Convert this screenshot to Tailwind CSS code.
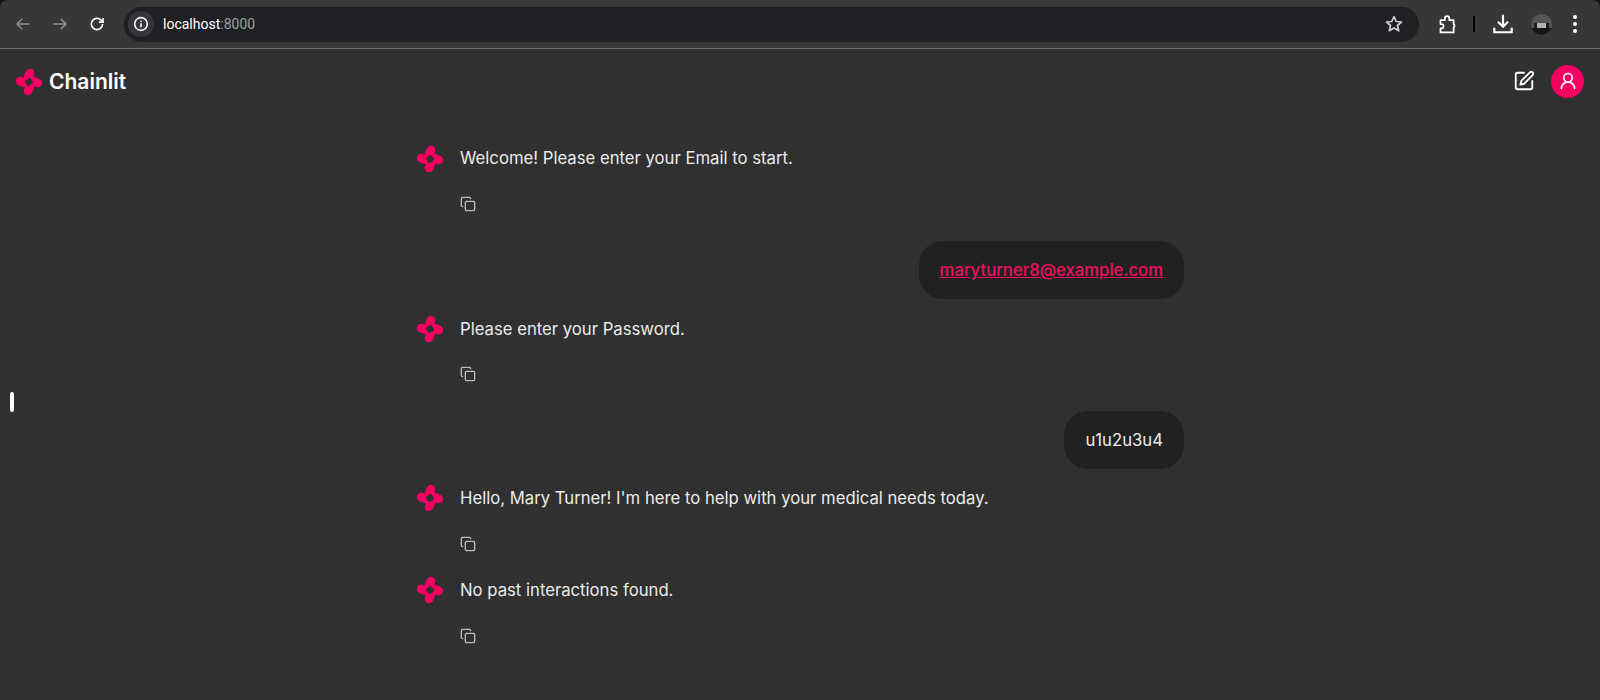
<!DOCTYPE html>
<html lang="en">
  <head>
    <meta charset="UTF-8" />
    <title>Chainlit</title>
    <script src="https://cdn.jsdelivr.net/npm/@tailwindcss/browser@4"></script>
  </head>
  <body class="bg-[#303030] font-['Inter',sans-serif] overflow-hidden">
    <svg class="hidden">
      <defs>
        <path id="petal" d="M12.700 1.200C15 1.200 16.300 3 15.900 5 15.600 6.500 15 7.400 14.300 8.300L12 8 9 10C8.400 10.400 7.900 10.100 7.900 9.400 7.900 8 8.400 6.500 9 4.900 9.800 2.900 10.700 1.200 12.700 1.200z" fill="#f80061" stroke="#f80061" stroke-width="1.100" stroke-linejoin="round" />
        <g id="petals">
          <use href="#petal" />
          <use href="#petal" transform="rotate(90 12 12)" />
          <use href="#petal" transform="rotate(180 12 12)" />
          <use href="#petal" transform="rotate(270 12 12)" />
        </g>
        <g id="copy" fill="none" stroke="#bdbdbd" stroke-width="2" stroke-linecap="round" stroke-linejoin="round">
          <rect x="8" y="8" width="14" height="14" rx="2" />
          <path d="M4 16c-1.100 0-2-.9-2-2V4c0-1.100.9-2 2-2h10c1.100 0 2 .9 2 2" />
        </g>
      </defs>
    </svg>

    <!-- browser toolbar -->
    <div class="bg-[#151515]">
      <div class="h-[49px] bg-[#373737] rounded-t-[8px] border-b border-[#6b6b6b] flex items-center">
        <div class="w-[124px] flex items-center pl-[14px] shrink-0">
          <svg class="w-[18px] h-[18px]" viewBox="0 0 24 24" fill="none" stroke="#8f8f8f" stroke-width="2"><path d="M21 12H4M11 5l-7 7 7 7" /></svg>
          <svg class="w-[18px] h-[18px] ml-[19px]" viewBox="0 0 24 24" fill="none" stroke="#8f8f8f" stroke-width="2"><path d="M3 12h17M13 5l7 7-7 7" /></svg>
          <svg class="w-[18px] h-[18px] ml-[19px]" viewBox="0 0 24 24" fill="none" stroke="#fff" stroke-width="2.200"><path d="M19.500 12a7.500 7.500 0 1 1-2.200-5.300L20 9.400" /><path d="M20 4v5.500h-5.500" /></svg>
        </div>
        <div class="w-[1295px] h-[35px] rounded-full bg-[#1f2023] flex items-center pl-[4px] pr-[15px] shrink-0">
          <div class="w-[26px] h-[26px] rounded-full bg-[#35363a] flex items-center justify-center">
            <svg class="w-[16px] h-[16px]" viewBox="0 0 24 24" fill="none" stroke="#fff" stroke-width="2.400"><circle cx="12" cy="12" r="9.500" /><path d="M12 11v6M12 7v2" /></svg>
          </div>
          <div class="ml-[9px] text-[14px] text-white font-['Roboto',sans-serif]">localhost<span class="text-[#a0a0a0]">:8000</span></div>
          <svg class="w-[20px] h-[20px] ml-auto" viewBox="0 0 24 24" fill="none" stroke="#d0d0d0" stroke-width="2" stroke-linejoin="round"><path d="M12 3l2.700 6 6.300.6-4.800 4.200 1.500 6.400L12 16.800l-5.700 3.400 1.500-6.400L3 9.600 9.300 9z" /></svg>
        </div>
        <div class="flex items-center flex-1 pl-[18px]">
          <svg class="w-[21px] h-[21px]" viewBox="0 0 24 24" fill="none" stroke="#fff" stroke-width="2" stroke-linejoin="round"><path d="M4 7h5V5a2.500 2.500 0 0 1 5 0v2h5v4.500a2.500 2.500 0 0 1 0 4V21H4v-4.500h1a2.500 2.500 0 0 0 0-5H4z" /></svg>
          <div class="w-[2px] h-[16px] bg-black ml-[15px]"></div>
          <svg class="w-[22px] h-[22px] ml-[17px]" viewBox="0 0 24 24" fill="none" stroke="#fff" stroke-width="2.400"><path d="M12 2v13M6.500 9.500 12 15l5.500-5.500M2.500 16v5h19v-5" /></svg>
          <div class="w-[21px] h-[21px] rounded-full bg-[#555] ml-[17px] flex flex-col items-center justify-end overflow-hidden">
            <div class="w-[15px] h-[5px] bg-[#d8d8d8]/70 border-x-[3px] border-[#1b1b1b]"></div>
            <div class="w-full h-[7px] bg-[#161616]"></div>
          </div>
          <div class="flex flex-col gap-[3px] ml-[21px]">
            <div class="w-[4px] h-[4px] rounded-full bg-white"></div>
            <div class="w-[4px] h-[4px] rounded-full bg-white"></div>
            <div class="w-[4px] h-[4px] rounded-full bg-white"></div>
          </div>
        </div>
      </div>
    </div>

    <!-- app header -->
    <div class="h-[64px] flex items-center justify-between pl-[15px] pr-[16px]">
      <div class="flex items-center">
        <svg class="w-[28px] h-[28px] mt-[1px]" viewBox="0 0 24 24"><use href="#petals" /></svg>
        <span class="ml-[6px] mt-[2px] text-[21px] font-semibold text-white">Chainlit</span>
      </div>
      <div class="flex items-center gap-[16px]">
        <svg class="w-[22px] h-[22px]" viewBox="0 0 24 24" fill="none" stroke="#fff" stroke-width="2" stroke-linecap="round" stroke-linejoin="round"><path d="M12 3H5a2 2 0 0 0-2 2v14a2 2 0 0 0 2 2h14a2 2 0 0 0 2-2v-7" /><path d="M18.400 2.600a2.100 2.100 0 0 1 3 3L12 15l-4 1 1-4z" /></svg>
        <div class="w-[33px] h-[33px] rounded-full bg-[#f80061] flex items-center justify-center">
          <svg class="w-[20px] h-[20px]" viewBox="0 0 24 24" fill="none" stroke="#fff" stroke-width="2" stroke-linecap="round"><circle cx="12" cy="8" r="5" /><path d="M20 21a8 8 0 0 0-16 0" /></svg>
        </div>
      </div>
    </div>

    <!-- messages -->
    <div class="w-[768px] ml-[416px] text-[16.700px] leading-[24px] text-[#ececec] pt-[33px]">
      <div class="flex">
        <svg class="w-[28px] h-[28px] mt-[-1px]" viewBox="0 0 24 24"><use href="#petals" /></svg>
        <div class="ml-[16px]">
          <p>Welcome! Please enter your Email to start.</p>
          <svg class="w-[16px] h-[16px] mt-[26px]" viewBox="0 0 24 24"><use href="#copy" /></svg>
        </div>
      </div>
      <div class="flex justify-end mt-[29px]">
        <div class="h-[58px] rounded-[24px] bg-[#212121] px-[21px] flex items-center font-medium text-[#ee0f60] underline">maryturner8@example.com</div>
      </div>
      <div class="flex mt-[18px]">
        <svg class="w-[28px] h-[28px] mt-[-2px]" viewBox="0 0 24 24"><use href="#petals" /></svg>
        <div class="ml-[16px]">
          <p>Please enter your Password.</p>
          <svg class="w-[16px] h-[16px] mt-[25px]" viewBox="0 0 24 24"><use href="#copy" /></svg>
        </div>
      </div>
      <div class="flex justify-end mt-[29px]">
        <div class="h-[58px] rounded-[24px] bg-[#212121] px-[21px] flex items-center">u1u2u3u4</div>
      </div>
      <div class="flex mt-[17px]">
        <svg class="w-[28px] h-[28px] mt-[-2px]" viewBox="0 0 24 24"><use href="#petals" /></svg>
        <div class="ml-[16px]">
          <p>Hello, Mary Turner! I'm here to help with your medical needs today.</p>
          <svg class="w-[16px] h-[16px] mt-[26px]" viewBox="0 0 24 24"><use href="#copy" /></svg>
        </div>
      </div>
      <div class="flex mt-[26px]">
        <svg class="w-[28px] h-[28px] mt-[-2px]" viewBox="0 0 24 24"><use href="#petals" /></svg>
        <div class="ml-[16px]">
          <p>No past interactions found.</p>
          <svg class="w-[16px] h-[16px] mt-[26px]" viewBox="0 0 24 24"><use href="#copy" /></svg>
        </div>
      </div>
    </div>

    <!-- sidebar handle -->
    <div class="absolute left-[10px] top-[392px] w-[4px] h-[20px] rounded-full bg-white"></div>
  </body>
</html>
